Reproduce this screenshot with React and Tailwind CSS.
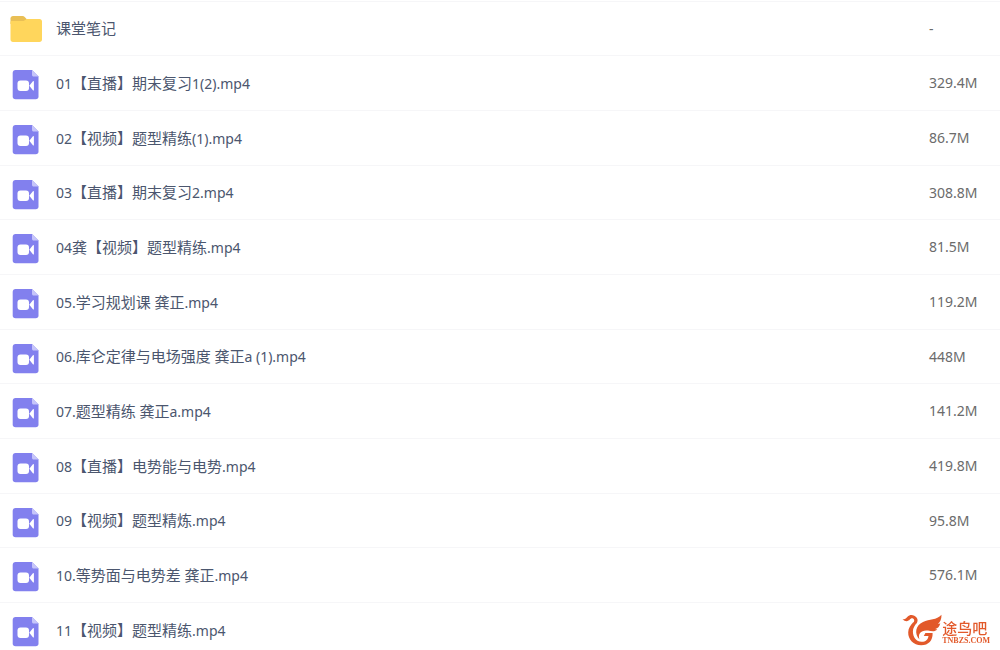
import React from 'react';

const files = [
  { name: '课堂笔记', size: '-', type: 'folder' },
  { name: '01【直播】期末复习1(2).mp4', size: '329.4M', type: 'video' },
  { name: '02【视频】题型精练(1).mp4', size: '86.7M', type: 'video' },
  { name: '03【直播】期末复习2.mp4', size: '308.8M', type: 'video' },
  { name: '04龚【视频】题型精练.mp4', size: '81.5M', type: 'video' },
  { name: '05.学习规划课 龚正.mp4', size: '119.2M', type: 'video' },
  { name: '06.库仑定律与电场强度 龚正a (1).mp4', size: '448M', type: 'video' },
  { name: '07.题型精练 龚正a.mp4', size: '141.2M', type: 'video' },
  { name: '08【直播】电势能与电势.mp4', size: '419.8M', type: 'video' },
  { name: '09【视频】题型精炼.mp4', size: '95.8M', type: 'video' },
  { name: '10.等势面与电势差 龚正.mp4', size: '576.1M', type: 'video' },
  { name: '11【视频】题型精练.mp4', size: '', type: 'video' },
];

const FolderIcon = () => (
  <svg viewBox="0 0 32 30" className="w-8 h-[30px]" aria-hidden="true">
    <path d="M3 0h9.500c1 0 1.600.3 2.200.9L17 3.500V8H.5V2.500C.5 1 1.500 0 3 0z" fill="#e9bf55" />
    <path d="M.5 6.500C.5 5.500 1 5 2 5h11.500l3-1.800c.4-.2.800-.2 1.300-.2h11.700c1.500 0 2.500.9 2.500 2.400V23.500c0 1.500-1 2.500-2.500 2.500H3C1.500 26 .5 25 .5 23.500z" fill="#ffd65c" />
  </svg>
);

const VideoIcon = () => (
  <svg viewBox="0 0 27 30" className="w-[27px] h-[30px]" aria-hidden="true">
    <path d="M3.500 0H20l6.500 6.500v20c0 1.700-1.100 2.800-2.800 2.800H3.500C1.800 29.300.7 28.200.7 26.500V2.800C.7 1.100 1.800 0 3.500 0z" fill="#8280ee" />
    <path d="M20 0l6.500 6.500h-4.700c-1.200 0-1.800-.6-1.800-1.800z" fill="#c6c5fa" />
    <rect x="5.500" y="10.500" width="11.500" height="10.500" rx="3" fill="#fff" />
    <path d="M17.300 15.700l3.600-4.400c.4-.5 1-.2 1 .4v8.200c0 .6-.6.900-1 .4z" fill="#fff" />
  </svg>
);

// Chinese runs are set one pixel larger than the latin ones
const FileName = ({ name }) =>
  name.split(/([\u3000-\u9fff]+)/).map((part, i) =>
    i % 2 ? <span key={i} className="text-[15px]">{part}</span> : part
  );

const Watermark = () => (
  <div className="fixed right-2.5 bottom-1 flex items-end text-[#e2592a]">
    <svg viewBox="0 0 40 32" className="w-10 h-8" aria-hidden="true">
      {/* head and crest */}
      <path d="M.5 5c2.500.8 3.300-.5 5-2.300C7.300.8 10 .5 12.300 1.700 15.600 3.300 16.600 6.500 14.500 9.500L11 9c1.700-1.800 1.600-3.800 0-4.600-1.300-.6-2.400.1-3.200 1.200C6.300 7.500 3 8 .5 5z" fill="currentColor" />
      {/* breast curling round into the tail */}
      <path d="M11 8.500l3.500.8c-1.800 2.500-3.600 4.600-3.600 8.200 0 5.700 3.400 10.200 8.600 10.300 4 .1 6.500-2.200 7-5.800h-4.700l1.600-3h7.200c.3 7.400-4 12.300-11.400 12.300C11.500 31.300 6 25.500 6.200 18.300c.1-4.300 2.600-7 4.800-9.800z" fill="currentColor" />
      {/* wing */}
      <path d="M17.500 25.500c-5.500-5.500-4-14.500 3.500-17.500C27.500 5 34.500 6.500 39.500.8c.1 4.600-1.300 7.200-3.500 9 .8 0 1.500-.2 2.300-.6-.8 3.300-2.600 5.100-5 5.900.6.200 1.200.2 2 .1-2.500 2.900-5.500 1.900-9.300 1.400-6.800-.8-10.500 3-8.500 8.900z" fill="currentColor" />
    </svg>
    <div className="flex flex-col">
      <span className="text-[15px] leading-4 font-medium">途鸟吧</span>
      <span className="font-['Liberation_Serif',serif] text-[8px] leading-2.5 font-bold">TNBZS.COM</span>
    </div>
  </div>
);

const App = () => {
  return (
    <main className="min-h-screen overflow-hidden bg-white pt-px font-['Noto_Sans','Noto_Sans_CJK_SC',sans-serif]">
      <table className="w-full table-fixed border-collapse text-sm leading-5">
        <tbody>
          {files.map((file) => (
            <tr key={file.name} className="h-[55px] nth-[3n+1]:h-[54px] border-t border-[#f6f6f8]">
              <td className="w-14 p-0 pt-1">
                <div className={file.type === 'folder' ? 'pl-[10px]' : 'pl-3'}>
                  {file.type === 'folder' ? <FolderIcon /> : <VideoIcon />}
                </div>
              </td>
              <td className="p-0 text-[#4b566e]">
                <FileName name={file.name} />
              </td>
              <td className="w-[71px] p-0 text-[#6b6b6b]">{file.size}</td>
            </tr>
          ))}
        </tbody>
      </table>
      <Watermark />
    </main>
  );
};

export default App;
